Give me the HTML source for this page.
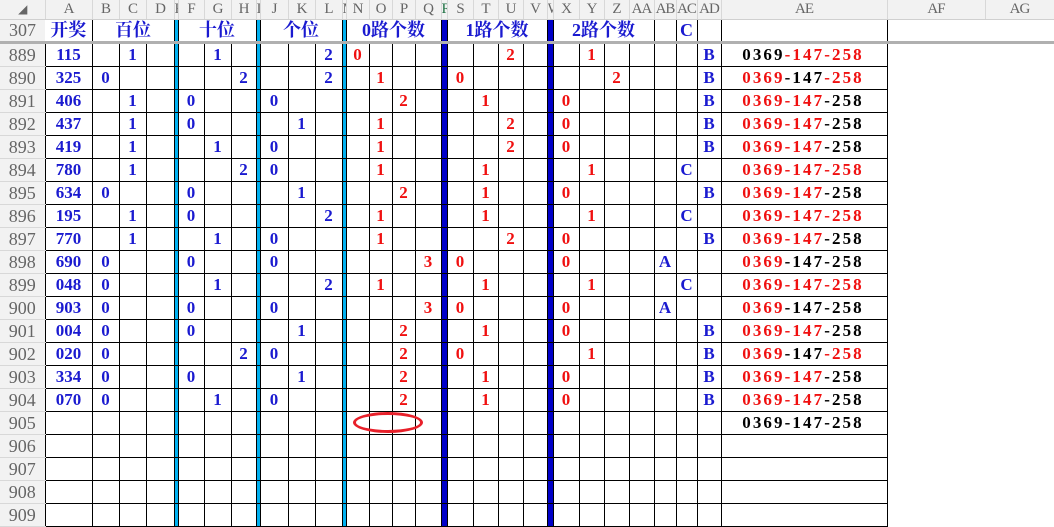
<!DOCTYPE html>
<html><head><meta charset="utf-8"><style>
body{margin:0;width:1054px;height:514px;overflow:hidden;background:#fff;position:relative}
table{border-collapse:collapse;table-layout:fixed;position:absolute;left:0;top:0;width:1054px}
td,th{padding:0;overflow:hidden;white-space:nowrap;text-align:center}
th{background:#f2f2f2;color:#666;font:18px "Liberation Serif",serif;border-bottom:1px solid #d8d8d8;font-weight:normal}
tr.h th,tr.h td{font:15px/19px "Liberation Serif",serif;height:19px;background:#f2f2f2;color:#666;border-right:1px solid #d8d8d8;border-bottom:1px solid #d0d0d0;letter-spacing:-1px}
tr.t td{font:bold 18px/21px "Liberation Serif","Noto Serif CJK SC",serif;height:21px;border-bottom:3px solid #b0b0b0;color:#1a1ad0;border-right:1px solid #000}
tr.t th{font:18px/21px "Liberation Serif",serif;border-bottom:3px solid #b0b0b0;height:21px}
tr.d td{height:22px;border:1px solid #000;font:bold 17px "Liberation Serif",serif;color:#1a1ad0}
tr.d td:nth-child(n+15):nth-child(-n+28){color:#f01010}
tr.d td:nth-child(n+29){color:#1a1ad0}
tr.d td:nth-child(6),tr.d td:nth-child(10),tr.d td:nth-child(14),.cy{background:#00b0f0}
tr.d td:nth-child(19),tr.d td:nth-child(24),.bl{background:#0000c8}
tr.d td:nth-child(32){color:#000;letter-spacing:2.1px;font-size:17px;text-indent:-2px}
tr.d td:nth-child(33),tr.d td:nth-child(34){border:none;background:#fff}
tr.t td.n{border-right:none}
.r{color:#f01010}.k{color:#000}
#ell{position:absolute;left:353px;top:412px;width:64px;height:15px;border:3px solid #e8202a;border-radius:50%}
</style></head><body>
<table>
<colgroup><col style="width:45px"><col style="width:47px"><col style="width:27px"><col style="width:27px"><col style="width:28px"><col style="width:4px"><col style="width:26px"><col style="width:27px"><col style="width:25px"><col style="width:4px"><col style="width:28px"><col style="width:27px"><col style="width:27px"><col style="width:4px"><col style="width:23px"><col style="width:23px"><col style="width:23px"><col style="width:26px"><col style="width:6px"><col style="width:26px"><col style="width:25px"><col style="width:25px"><col style="width:24px"><col style="width:6px"><col style="width:26px"><col style="width:25px"><col style="width:25px"><col style="width:25px"><col style="width:22px"><col style="width:21px"><col style="width:24px"><col style="width:166px"><col style="width:98px"><col style="width:69px"></colgroup>
<tr class="h"><th style="font-size:12px">◢</th><td>A</td><td>B</td><td>C</td><td>D</td><td>E</td><td>F</td><td>G</td><td>H</td><td>I</td><td>J</td><td>K</td><td>L</td><td>M</td><td>N</td><td>O</td><td>P</td><td>Q</td><td style="color:#217346">R</td><td>S</td><td>T</td><td>U</td><td>V</td><td>W</td><td>X</td><td>Y</td><td>Z</td><td>AA</td><td>AB</td><td>AC</td><td>AD</td><td>AE</td><td>AF</td><td>AG</td></tr>
<tr class="t"><th>307</th><td>开奖</td><td colspan="3">百位</td><td class="cy"></td><td colspan="3">十位</td><td class="cy"></td><td colspan="3">个位</td><td class="cy"></td><td colspan="4" class="r">0路个数</td><td class="bl"></td><td colspan="4" class="r">1路个数</td><td class="bl"></td><td colspan="4" class="r">2路个数</td><td></td><td>C</td><td></td><td></td><td class="n"></td><td class="n"></td></tr>
<tr class="d"><th>889</th><td>115</td><td></td><td>1</td><td></td><td></td><td></td><td>1</td><td></td><td></td><td></td><td></td><td>2</td><td></td><td>0</td><td></td><td></td><td></td><td></td><td></td><td></td><td>2</td><td></td><td></td><td></td><td>1</td><td></td><td></td><td></td><td></td><td>B</td><td><span class="k">0369</span><span class="r">-147-258</span></td><td></td><td></td></tr>
<tr class="d"><th>890</th><td>325</td><td>0</td><td></td><td></td><td></td><td></td><td></td><td>2</td><td></td><td></td><td></td><td>2</td><td></td><td></td><td>1</td><td></td><td></td><td></td><td>0</td><td></td><td></td><td></td><td></td><td></td><td></td><td>2</td><td></td><td></td><td></td><td>B</td><td><span class="r">0369</span><span class="k">-147</span><span class="r">-258</span></td><td></td><td></td></tr>
<tr class="d"><th>891</th><td>406</td><td></td><td>1</td><td></td><td></td><td>0</td><td></td><td></td><td></td><td>0</td><td></td><td></td><td></td><td></td><td></td><td>2</td><td></td><td></td><td></td><td>1</td><td></td><td></td><td></td><td>0</td><td></td><td></td><td></td><td></td><td></td><td>B</td><td><span class="r">0369-147</span><span class="k">-258</span></td><td></td><td></td></tr>
<tr class="d"><th>892</th><td>437</td><td></td><td>1</td><td></td><td></td><td>0</td><td></td><td></td><td></td><td></td><td>1</td><td></td><td></td><td></td><td>1</td><td></td><td></td><td></td><td></td><td></td><td>2</td><td></td><td></td><td>0</td><td></td><td></td><td></td><td></td><td></td><td>B</td><td><span class="r">0369-147</span><span class="k">-258</span></td><td></td><td></td></tr>
<tr class="d"><th>893</th><td>419</td><td></td><td>1</td><td></td><td></td><td></td><td>1</td><td></td><td></td><td>0</td><td></td><td></td><td></td><td></td><td>1</td><td></td><td></td><td></td><td></td><td></td><td>2</td><td></td><td></td><td>0</td><td></td><td></td><td></td><td></td><td></td><td>B</td><td><span class="r">0369-147</span><span class="k">-258</span></td><td></td><td></td></tr>
<tr class="d"><th>894</th><td>780</td><td></td><td>1</td><td></td><td></td><td></td><td></td><td>2</td><td></td><td>0</td><td></td><td></td><td></td><td></td><td>1</td><td></td><td></td><td></td><td></td><td>1</td><td></td><td></td><td></td><td></td><td>1</td><td></td><td></td><td></td><td>C</td><td></td><td><span class="r">0369-147-258</span></td><td></td><td></td></tr>
<tr class="d"><th>895</th><td>634</td><td>0</td><td></td><td></td><td></td><td>0</td><td></td><td></td><td></td><td></td><td>1</td><td></td><td></td><td></td><td></td><td>2</td><td></td><td></td><td></td><td>1</td><td></td><td></td><td></td><td>0</td><td></td><td></td><td></td><td></td><td></td><td>B</td><td><span class="r">0369-147</span><span class="k">-258</span></td><td></td><td></td></tr>
<tr class="d"><th>896</th><td>195</td><td></td><td>1</td><td></td><td></td><td>0</td><td></td><td></td><td></td><td></td><td></td><td>2</td><td></td><td></td><td>1</td><td></td><td></td><td></td><td></td><td>1</td><td></td><td></td><td></td><td></td><td>1</td><td></td><td></td><td></td><td>C</td><td></td><td><span class="r">0369-147-258</span></td><td></td><td></td></tr>
<tr class="d"><th>897</th><td>770</td><td></td><td>1</td><td></td><td></td><td></td><td>1</td><td></td><td></td><td>0</td><td></td><td></td><td></td><td></td><td>1</td><td></td><td></td><td></td><td></td><td></td><td>2</td><td></td><td></td><td>0</td><td></td><td></td><td></td><td></td><td></td><td>B</td><td><span class="r">0369-147</span><span class="k">-258</span></td><td></td><td></td></tr>
<tr class="d"><th>898</th><td>690</td><td>0</td><td></td><td></td><td></td><td>0</td><td></td><td></td><td></td><td>0</td><td></td><td></td><td></td><td></td><td></td><td></td><td>3</td><td></td><td>0</td><td></td><td></td><td></td><td></td><td>0</td><td></td><td></td><td></td><td>A</td><td></td><td></td><td><span class="r">0369</span><span class="k">-147-258</span></td><td></td><td></td></tr>
<tr class="d"><th>899</th><td>048</td><td>0</td><td></td><td></td><td></td><td></td><td>1</td><td></td><td></td><td></td><td></td><td>2</td><td></td><td></td><td>1</td><td></td><td></td><td></td><td></td><td>1</td><td></td><td></td><td></td><td></td><td>1</td><td></td><td></td><td></td><td>C</td><td></td><td><span class="r">0369-147-258</span></td><td></td><td></td></tr>
<tr class="d"><th>900</th><td>903</td><td>0</td><td></td><td></td><td></td><td>0</td><td></td><td></td><td></td><td>0</td><td></td><td></td><td></td><td></td><td></td><td></td><td>3</td><td></td><td>0</td><td></td><td></td><td></td><td></td><td>0</td><td></td><td></td><td></td><td>A</td><td></td><td></td><td><span class="r">0369</span><span class="k">-147-258</span></td><td></td><td></td></tr>
<tr class="d"><th>901</th><td>004</td><td>0</td><td></td><td></td><td></td><td>0</td><td></td><td></td><td></td><td></td><td>1</td><td></td><td></td><td></td><td></td><td>2</td><td></td><td></td><td></td><td>1</td><td></td><td></td><td></td><td>0</td><td></td><td></td><td></td><td></td><td></td><td>B</td><td><span class="r">0369-147</span><span class="k">-258</span></td><td></td><td></td></tr>
<tr class="d"><th>902</th><td>020</td><td>0</td><td></td><td></td><td></td><td></td><td></td><td>2</td><td></td><td>0</td><td></td><td></td><td></td><td></td><td></td><td>2</td><td></td><td></td><td>0</td><td></td><td></td><td></td><td></td><td></td><td>1</td><td></td><td></td><td></td><td></td><td>B</td><td><span class="r">0369</span><span class="k">-147</span><span class="r">-258</span></td><td></td><td></td></tr>
<tr class="d"><th>903</th><td>334</td><td>0</td><td></td><td></td><td></td><td>0</td><td></td><td></td><td></td><td></td><td>1</td><td></td><td></td><td></td><td></td><td>2</td><td></td><td></td><td></td><td>1</td><td></td><td></td><td></td><td>0</td><td></td><td></td><td></td><td></td><td></td><td>B</td><td><span class="r">0369-147</span><span class="k">-258</span></td><td></td><td></td></tr>
<tr class="d"><th>904</th><td>070</td><td>0</td><td></td><td></td><td></td><td></td><td>1</td><td></td><td></td><td>0</td><td></td><td></td><td></td><td></td><td></td><td>2</td><td></td><td></td><td></td><td>1</td><td></td><td></td><td></td><td>0</td><td></td><td></td><td></td><td></td><td></td><td>B</td><td><span class="r">0369-147</span><span class="k">-258</span></td><td></td><td></td></tr>
<tr class="d"><th>905</th><td></td><td></td><td></td><td></td><td></td><td></td><td></td><td></td><td></td><td></td><td></td><td></td><td></td><td></td><td></td><td></td><td></td><td></td><td></td><td></td><td></td><td></td><td></td><td></td><td></td><td></td><td></td><td></td><td></td><td></td><td><span class="k">0369-147-258</span></td><td></td><td></td></tr>
<tr class="d"><th>906</th><td></td><td></td><td></td><td></td><td></td><td></td><td></td><td></td><td></td><td></td><td></td><td></td><td></td><td></td><td></td><td></td><td></td><td></td><td></td><td></td><td></td><td></td><td></td><td></td><td></td><td></td><td></td><td></td><td></td><td></td><td></td><td></td><td></td></tr>
<tr class="d"><th>907</th><td></td><td></td><td></td><td></td><td></td><td></td><td></td><td></td><td></td><td></td><td></td><td></td><td></td><td></td><td></td><td></td><td></td><td></td><td></td><td></td><td></td><td></td><td></td><td></td><td></td><td></td><td></td><td></td><td></td><td></td><td></td><td></td><td></td></tr>
<tr class="d"><th>908</th><td></td><td></td><td></td><td></td><td></td><td></td><td></td><td></td><td></td><td></td><td></td><td></td><td></td><td></td><td></td><td></td><td></td><td></td><td></td><td></td><td></td><td></td><td></td><td></td><td></td><td></td><td></td><td></td><td></td><td></td><td></td><td></td><td></td></tr>
<tr class="d"><th>909</th><td></td><td></td><td></td><td></td><td></td><td></td><td></td><td></td><td></td><td></td><td></td><td></td><td></td><td></td><td></td><td></td><td></td><td></td><td></td><td></td><td></td><td></td><td></td><td></td><td></td><td></td><td></td><td></td><td></td><td></td><td></td><td></td><td></td></tr>
</table>
<div id="ell"></div>
</body></html>
